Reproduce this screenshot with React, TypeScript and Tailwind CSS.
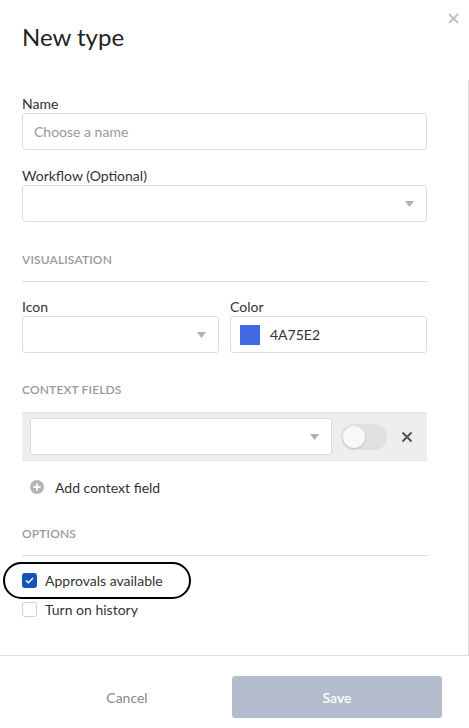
import React from "react";

function Caret() {
  return (
    <svg width="9" height="6" viewBox="0 0 9 6" className="shrink-0">
      <path d="M0 0h9L4.5 6z" fill="#b0b0b0" />
    </svg>
  );
}

function Label({ children }: { children: React.ReactNode }) {
  return <div className="h-[18px] text-[14px] leading-[18px] text-[#333]">{children}</div>;
}

function SectionTitle({ children, line = true }: { children: React.ReactNode; line?: boolean }) {
  return (
    <div
      className={
        line
          ? "h-[30px] border-b border-[#dedede] text-[12px] font-semibold leading-[16px] tracking-[0.15px] text-[#999]"
          : "h-[16px] text-[12px] font-semibold leading-[16px] tracking-[0.15px] text-[#999]"
      }
    >
      {children}
    </div>
  );
}

function Select({ className = "" }: { className?: string }) {
  return (
    <div
      className={`flex h-[37px] items-center justify-end rounded-[3px] border border-[#dcdcdc] bg-white pr-[12px] ${className}`}
    >
      <Caret />
    </div>
  );
}

export default function App() {
  return (
    <div
      className="relative flex h-[728px] w-[469px] flex-col bg-white text-[#333]"
      style={{ fontFamily: "Lato, 'Open Sans', sans-serif" }}
    >
      <button className="absolute right-[10px] top-[13px] text-[#c0c0c0]">
        <svg width="11" height="11" viewBox="0 0 11 11">
          <path d="M1 1l9 9M10 1l-9 9" stroke="currentColor" strokeWidth="1.8" />
        </svg>
      </button>

      <header className="h-[80px] px-[22px] pt-[22px]">
        <h1 className="text-[24px] leading-[30px] text-[#222]">New type</h1>
      </header>

      <main className="flex-1 border-r border-[#dedede] pl-[22px] pr-[41px] pt-[15px]">
        <Label>Name</Label>
        <div className="flex h-[37px] items-center rounded-[3px] border border-[#dcdcdc] px-[11px] text-[14px] text-[#999]">
          Choose a name
        </div>

        <div className="mt-[17px]">
          <Label>Workflow (Optional)</Label>
          <Select />
        </div>

        <div className="mt-[30px]">
          <SectionTitle>VISUALISATION</SectionTitle>
        </div>

        <div className="mt-[16px] grid grid-cols-2 gap-[11px]">
          <div>
            <Label>Icon</Label>
            <Select />
          </div>
          <div>
            <Label>Color</Label>
            <div className="flex h-[37px] items-center gap-[10px] rounded-[3px] border border-[#dcdcdc] px-[9px] text-[14px] text-[#333]">
              <span className="h-[20px] w-[20px] bg-[#4169e1]" />
              4A75E2
            </div>
          </div>
        </div>

        <div className="mt-[29px]">
          <SectionTitle line={false}>CONTEXT FIELDS</SectionTitle>
        </div>

        <div className="mt-[14px] flex h-[49px] items-center border-y border-[#e4e4e4] bg-[#eeeeee] pl-[8px] pr-[14px]">
          <Select className="w-[302px]" />
          <div className="ml-[9px] flex h-[26px] w-[46px] items-center rounded-full bg-[#e0e0e0] px-[2px]">
            <span className="h-[22px] w-[22px] rounded-full bg-[#f8f8f8] shadow-[0_1px_2px_rgba(0,0,0,0.15)]" />
          </div>
          <svg width="12" height="12" viewBox="0 0 12 12" className="ml-auto">
            <path d="M1.5 1.5l9 9M10.5 1.5l-9 9" stroke="#555" strokeWidth="2" />
          </svg>
        </div>

        <div className="mt-[17px] flex h-[18px] items-center gap-[11px] pl-[8px] text-[14px] text-[#333]">
          <svg width="14" height="14" viewBox="0 0 14 14">
            <circle cx="7" cy="7" r="7" fill="#b5b5b5" />
            <path d="M7 3.5v7M3.5 7h7" stroke="#fff" strokeWidth="1.8" />
          </svg>
          Add context field
        </div>

        <div className="mt-[30px]">
          <SectionTitle>OPTIONS</SectionTitle>
        </div>

        <div className="relative mt-[17px] flex flex-col gap-[14px] text-[14px] text-[#333]">
          <div className="flex h-[15px] items-center gap-[8px]">
            <span className="flex h-[15px] w-[15px] items-center justify-center rounded-[3px] bg-[#1554b8]">
              <svg width="9" height="7" viewBox="0 0 9 7">
                <path d="M1 3.5l2.3 2.3L8 1" stroke="#fff" strokeWidth="1.4" fill="none" />
              </svg>
            </span>
            Approvals available
          </div>
          <div className="flex h-[15px] items-center gap-[8px]">
            <span className="h-[15px] w-[15px] rounded-[3px] border border-[#d0d0d0] bg-white" />
            Turn on history
          </div>
          <span className="absolute left-[-19px] top-[-11px] h-[37px] w-[188px] rounded-full border-[2.5px] border-black" />
        </div>
      </main>

      <footer className="flex h-[73px] items-center border-t border-[#dedede] pl-[22px] pr-[27px] pt-[10px]">
        <button className="flex-1 text-[14px] text-[#888]">Cancel</button>
        <button className="h-[42px] w-[210px] rounded-[3px] bg-[#b4bccd] text-[14px] font-semibold text-white">
          Save
        </button>
      </footer>
    </div>
  );
}
